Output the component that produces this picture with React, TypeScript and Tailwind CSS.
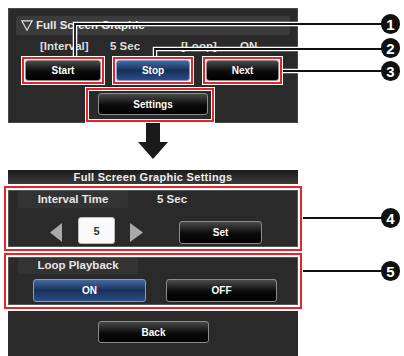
import React from "react";

const redBox = "border-2 border-[#e4252c] shadow-[0_0_0_1px_#fff]";

function Btn({ label, blue, className = "" }: { label: string; blue?: boolean; className?: string }) {
  const skin = blue
    ? "bg-[linear-gradient(#44699f,#17305a_50%,#2a4e86)] border-[#7f9fd0]"
    : "bg-[linear-gradient(#4a4a4a,#0b0b0b_55%,#000)] border-[#8c8c8c]";
  return (
    <div
      className={`flex items-center justify-center rounded-[3px] border text-[10px] font-bold text-white ${skin} ${className}`}
    >
      {label}
    </div>
  );
}

const callouts = [
  { n: 1, y: 24 },
  { n: 2, y: 48 },
  { n: 3, y: 71 },
  { n: 4, y: 218 },
  { n: 5, y: 271 },
];

export default function App() {
  return (
    <div className="relative h-[356px] w-[404px] overflow-hidden bg-white font-['Liberation_Sans',Arial,sans-serif]">
      {/* top: Full Screen Graphic panel */}
      <div className="ml-[8px] mt-[8px] flex h-[115px] w-[290px] flex-col bg-[#2a2a2a] shadow-[inset_0_0_0_1px_#484848]">
        <div className="mx-[8px] mt-[8px] flex h-[19px] items-center gap-[3px] rounded-[2px] bg-[#3b3b3b] pl-[5px] text-[11.5px] font-bold text-[#e8e8e8]">
          <svg width="12" height="11" viewBox="0 0 12 11">
            <polygon points="0.8,0.8 11.2,0.8 6,10.2" fill="none" stroke="#e0e0e0" strokeWidth="1.2" />
          </svg>
          <span>Full Screen Graphic</span>
        </div>
        <div className="mt-[5px] flex h-[14px] items-center pl-[32px] text-[11.5px] font-bold text-[#dedede]">
          <span className="w-[70px]">[Interval]</span>
          <span className="w-[71px]">5 Sec</span>
          <span className="w-[59px]">[Loop]</span>
          <span>ON</span>
        </div>
        <div className="mt-[3px] flex pl-[14px]">
          <div className={`${redBox} h-[27px] w-[82px] bg-white p-px`}>
            <Btn label="Start" className="h-full w-full" />
          </div>
          <div className={`${redBox} ml-[9px] h-[27px] w-[80px] bg-white p-px`}>
            <Btn label="Stop" blue className="h-full w-full" />
          </div>
          <div className={`${redBox} ml-[10px] h-[27px] w-[79px] bg-white p-px`}>
            <Btn label="Next" className="h-full w-full" />
          </div>
        </div>
        <div className="ml-[78px] mt-[4px] h-[34px] w-[128px] border-2 border-[#e4252c] bg-[#2a2a2a] pl-[10px] pt-[3px] shadow-[0_0_0_1px_#fff,inset_0_0_0_1px_#fff]">
          <Btn label="Settings" className="h-[22px] w-[110px]" />
        </div>
      </div>

      {/* arrow */}
      <svg className="ml-[138px] block" width="30" height="37" viewBox="0 0 30 37">
        <rect x="8" y="0" width="14" height="20" fill="#1a1a1a" />
        <polygon points="0,19 30,19 15,36" fill="#1a1a1a" />
      </svg>

      {/* bottom: settings screen */}
      <div className="ml-[8px] mt-[10px] flex h-[14px] w-[290px] items-center justify-center bg-[linear-gradient(#1c1c1c,#3a3a3a)] text-[11px] font-bold tracking-[0.3px] text-[#eeeeee]">
        Full Screen Graphic Settings
      </div>

      <div className="ml-[4px] mt-[2px] h-[65px] w-[298px] border-2 border-[#e4252c] bg-white p-[2px]">
        <div className="flex h-full flex-col bg-[#2a2a2a] shadow-[inset_0_0_0_1px_#555]">
          <div className="mt-px flex items-center">
            <div className="ml-[10px] flex h-[17px] w-[110px] items-center justify-center rounded-[2px] bg-[#333333] text-[11.5px] font-bold text-[#e6e6e6]">
              Interval Time
            </div>
            <span className="ml-[29px] text-[11.5px] font-bold text-[#e6e6e6]">5 Sec</span>
          </div>
          <div className="mt-[9px] flex h-[27px] items-center pl-[42px]">
            <svg width="12" height="19" viewBox="0 0 12 19" className="mt-[3px]">
              <polygon points="12,0 12,19 0,9.5" fill="#a9a9a9" />
            </svg>
            <div className="ml-[16px] flex h-[27px] w-[37px] items-center justify-center rounded-[3px] border border-[#bdbdbd] bg-[#fafafa] text-[11px] font-bold text-[#333]">
              5
            </div>
            <svg width="13" height="19" viewBox="0 0 13 19" className="ml-[15px] mt-[3px]">
              <polygon points="0,0 0,19 13,9.5" fill="#a9a9a9" />
            </svg>
            <Btn label="Set" className="ml-[36px] mt-[3px] h-[23px] w-[83px]" />
          </div>
        </div>
      </div>

      <div className="ml-[4px] mt-[2px] h-[56px] w-[298px] border-2 border-[#e4252c] bg-white p-[2px]">
        <div className="flex h-full flex-col bg-[#2a2a2a] shadow-[inset_0_0_0_1px_#555]">
          <div className="ml-[10px] mt-px flex h-[16px] w-[120px] items-center justify-center rounded-[2px] bg-[#333333] text-[11.5px] font-bold text-[#e6e6e6]">
            Loop Playback
          </div>
          <div className="mt-[5px] flex pl-[25px]">
            <Btn label="ON" blue className="h-[23px] w-[113px]" />
            <Btn label="OFF" className="ml-[20px] h-[23px] w-[111px]" />
          </div>
        </div>
      </div>

      <div className="ml-[8px] mt-[2px] h-[45px] w-[290px] bg-[#2a2a2a] pl-[90px] pt-[10px]">
        <Btn label="Back" className="h-[22px] w-[111px]" />
      </div>

      {/* callout lines */}
      <svg className="pointer-events-none absolute left-0 top-0" width="404" height="356" viewBox="0 0 404 356">
        <g fill="none" stroke="#fff" strokeWidth="4.5">
          <polyline points="75,57 75,24 384,24" />
          <polyline points="155,57 155,49 384,49" />
          <line x1="283" y1="71" x2="384" y2="71" />
        </g>
        <g fill="none" stroke="#111" strokeWidth="1.8">
          <polyline points="75,56 75,24 384,24" />
          <polyline points="155,56 155,49 384,49" />
          <line x1="283" y1="71" x2="384" y2="71" />
          <line x1="303" y1="218" x2="384" y2="218" />
          <line x1="303" y1="271" x2="384" y2="271" />
        </g>
      </svg>

      {callouts.map((c) => (
        <div
          key={c.n}
          className="absolute left-[381px] flex h-[20px] w-[19px] items-center justify-center rounded-full bg-[#111] text-[15px] font-bold leading-none text-white"
          style={{ top: c.y - 10 }}
        >
          {c.n}
        </div>
      ))}
    </div>
  );
}
